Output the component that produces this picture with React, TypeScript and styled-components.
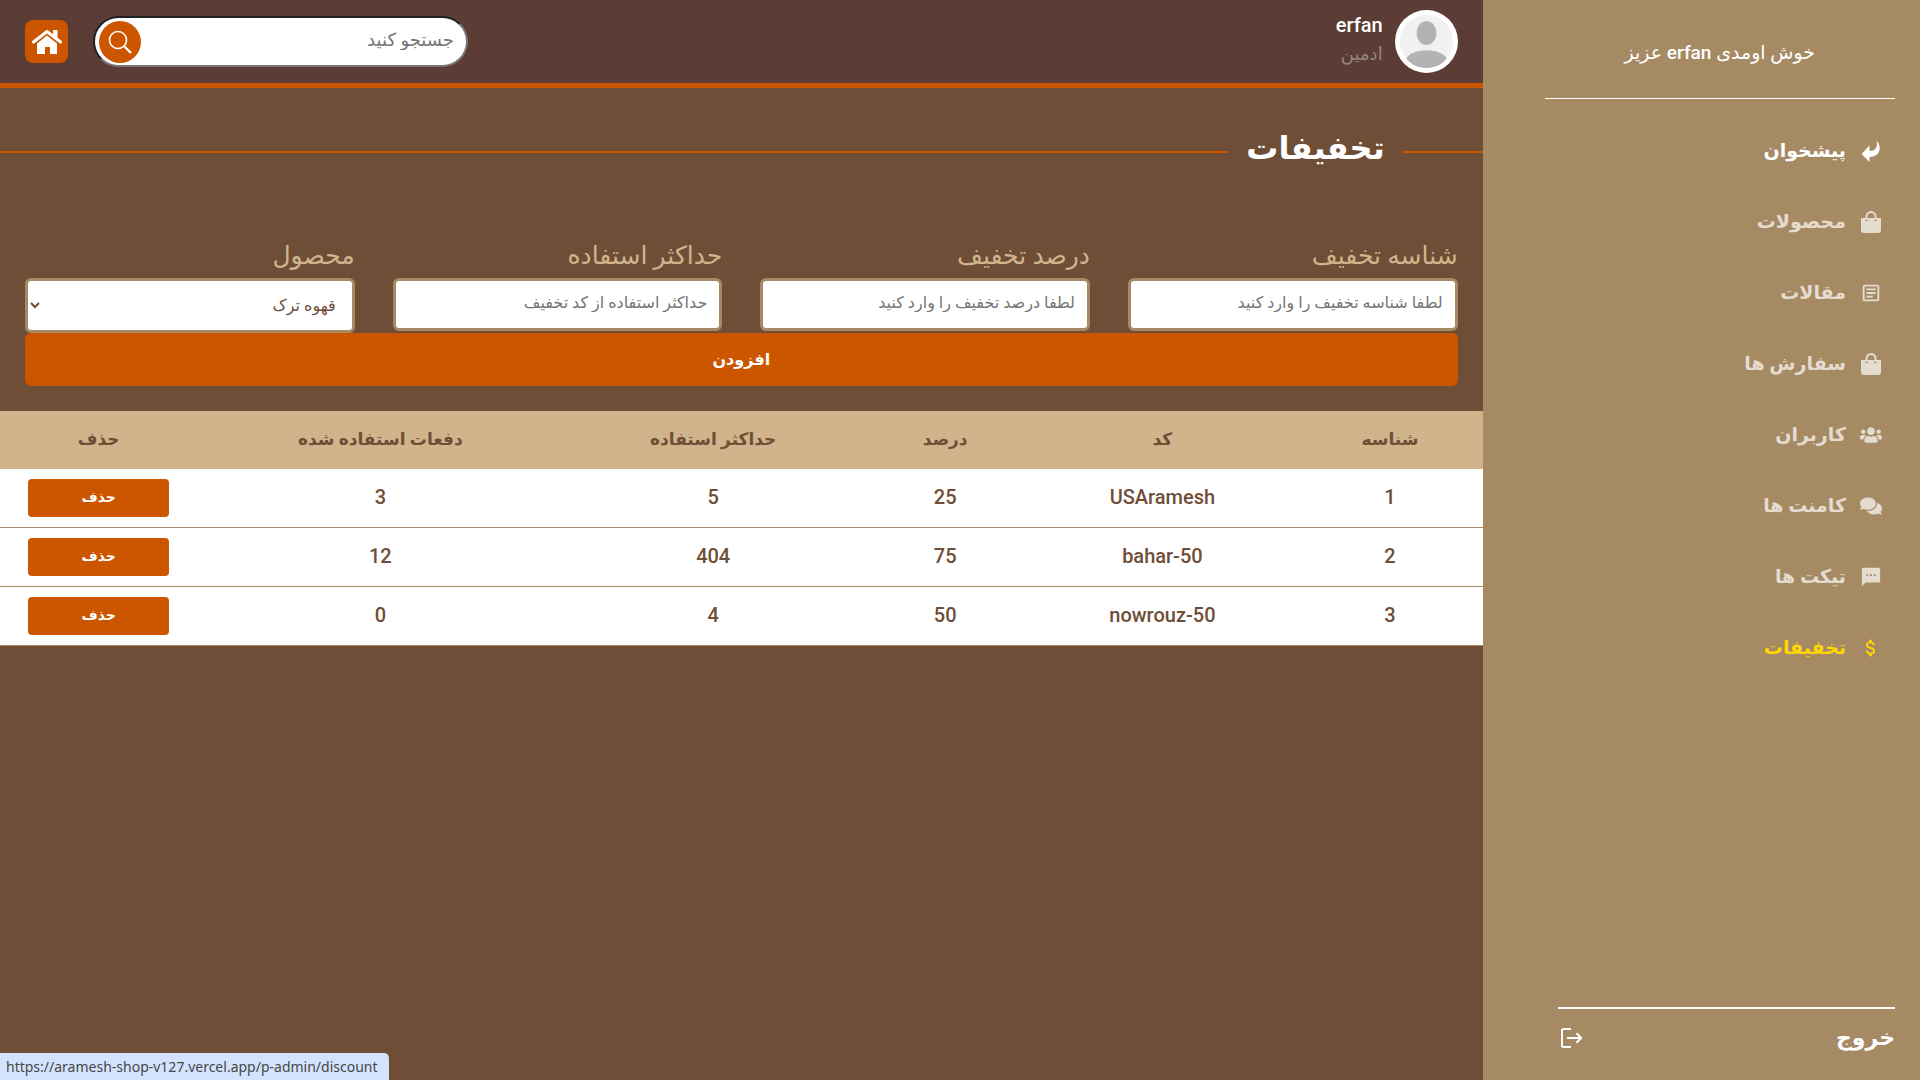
import React from "react";
import styled, { createGlobalStyle } from "styled-components";
import { FaUsers, FaComments } from "react-icons/fa";
import { MdOutlineArticle, MdTextsms, MdAttachMoney } from "react-icons/md";

const color = {
  coffee: "#6f4e37",
  cocoa: "#5c3d36",
  sand: "#a68a64",
  tan: "#d2b48c",
  orange: "#cc5500",
  gold: "#ffd700",
};

const GlobalStyle = createGlobalStyle`
  *, *::before, *::after { box-sizing: border-box; }
  body {
    margin: 0;
    background: ${color.coffee};
    font-family: Roboto, "DejaVu Sans", sans-serif;
    direction: rtl;
  }
  button, input, select { font-family: inherit; }
  h1, p, ul { margin: 0; padding: 0; }
`;

const Layout = styled.div`
  display: grid;
  grid-template-columns: 59fr 200fr;
  min-height: 100vh;
`;

const Sidebar = styled.aside`
  display: flex;
  flex-direction: column;
  padding: 36px 25px 20px 62px;
  background: ${color.sand};
  color: #fff;
`;

const Welcome = styled.p`
  padding-bottom: 28px;
  border-bottom: 1px solid #fff;
  font-size: 19px;
  font-weight: 500;
  line-height: 34px;
  text-align: center;
`;

const Menu = styled.ul`
  flex: 1;
  display: flex;
  flex-direction: column;
  gap: 35px;
  padding: 34px 13px 0 0;
  list-style: none;
`;

const MenuLink = styled.a<{ $tone: string }>`
  display: flex;
  align-items: center;
  gap: 14px;
  color: ${(p) => p.$tone};
  font-size: 19px;
  font-weight: 700;
  line-height: 36px;
  text-decoration: none;
  svg { width: 22px; height: 22px; }
`;

const Logout = styled.button`
  display: flex;
  align-items: center;
  justify-content: space-between;
  margin-left: 13px;
  padding: 7px 0 0;
  border: 0;
  border-top: 2px solid #fff;
  background: none;
  color: #fff;
  font-size: 22px;
  font-weight: 700;
  line-height: 44px;
`;

const Main = styled.main`
  min-width: 0;
`;

const Header = styled.header`
  display: flex;
  align-items: center;
  justify-content: space-between;
  padding: 10px 25px;
  border-bottom: 5px solid ${color.orange};
  background: ${color.cocoa};
`;

const Profile = styled.div`
  display: flex;
  gap: 12px;
`;

const Avatar = styled.svg`
  width: 63px;
  height: 63px;
`;

const UserName = styled.p`
  color: #fff;
  font-size: 20px;
  font-weight: 500;
  line-height: 30px;
`;

const Role = styled.p`
  color: #958480;
  font-size: 18px;
  line-height: 28px;
`;

const Tools = styled.div`
  display: flex;
  align-items: center;
  gap: 25px;
`;

const SearchBox = styled.form`
  display: flex;
  align-items: center;
  width: 375px;
  height: 51px;
  padding: 0 12px 0 4px;
  border: 2px inset #767676;
  border-radius: 26px;
  background: #fff;
`;

const SearchInput = styled.input`
  flex: 1;
  min-width: 0;
  padding: 0 0 4px;
  border: 0;
  outline: 0;
  background: none;
  font-size: 18px;
  &::placeholder { color: #757575; }
`;

const SearchButton = styled.button`
  display: grid;
  place-items: center;
  width: 42px;
  height: 42px;
  padding: 0;
  border: 0;
  border-radius: 50%;
  background: ${color.orange};
  color: #fff;
`;

const HomeLink = styled.a`
  display: grid;
  place-items: center;
  width: 43px;
  height: 43px;
  border-radius: 8px;
  background: ${color.orange};
  color: #fff;
`;

const Title = styled.h1`
  display: flex;
  align-items: center;
  gap: 18px;
  padding-top: 28px;
  color: #fff;
  font-size: 32px;
  font-weight: 700;
  line-height: 64px;
  &::before, &::after {
    content: "";
    height: 2px;
    margin-top: 8px;
    background: ${color.orange};
  }
  &::before { width: 80px; }
  &::after { flex: 1; }
`;

const Form = styled.form`
  padding: 54px 25px 25px;
`;

const Fields = styled.div`
  display: grid;
  grid-template-columns: repeat(4, 1fr);
  align-items: start;
  column-gap: 38px;
`;

const Field = styled.label`
  display: flex;
  flex-direction: column;
  color: ${color.tan};
  font-size: 25px;
  line-height: 44px;
`;

const TextInput = styled.input`
  width: 100%;
  height: 53px;
  padding: 0 12px 4px;
  border: 3px solid ${color.sand};
  border-radius: 6px;
  outline: 0;
  background: #fff;
  font-size: 16px;
  &::placeholder { color: #757575; }
`;

const Select = styled.select`
  width: 100%;
  height: 55px;
  padding: 0 12px 0 0;
  border: 3px solid ${color.sand};
  border-radius: 6px;
  background: #fff;
  color: ${color.coffee};
  font-size: 16px;
`;

const AddButton = styled.button`
  display: block;
  width: 100%;
  height: 53px;
  border: 0;
  border-radius: 6px;
  background: ${color.orange};
  color: #fff;
  font-size: 16px;
  font-weight: 700;
`;

const Table = styled.table`
  width: 100%;
  table-layout: fixed;
  border-collapse: separate;
  border-spacing: 0;
  color: ${color.coffee};
  text-align: center;
`;

const Col = styled.col<{ $width: string }>`
  width: ${(p) => p.$width};
`;

const HeadCell = styled.th`
  height: 58px;
  padding: 0 0 2px;
  background: ${color.tan};
  font-size: 17px;
  font-weight: 700;
`;

const Cell = styled.td`
  height: 59px;
  padding: 0 28px 2px;
  border-bottom: 1px solid ${color.sand};
  background: #fff;
  font-size: 20px;
  font-weight: 500;
`;

const ActionCell = styled(Cell)`
  padding-bottom: 0;
`;

const DeleteButton = styled.button`
  display: block;
  width: 100%;
  height: 38px;
  padding: 0 0 2px;
  border: 0;
  border-radius: 4px;
  background: ${color.orange};
  color: #fff;
  font-size: 14px;
  font-weight: 700;
`;

const StatusBar = styled.div`
  position: fixed;
  bottom: 0;
  left: 0;
  padding: 0 11px 0 6px;
  border-top-right-radius: 5px;
  background: #d3e3fd;
  color: #474747;
  direction: ltr;
  font-family: "Noto Sans", sans-serif;
  font-size: 14px;
  line-height: 27px;
`;

const ReturnIcon = () => (
  <svg viewBox="0 0 22 22" fill="currentColor" aria-hidden="true">
    <path d="M1.500 14 9.500 5.500V11C14.500 11 18.500 8 16.500 .5 22 6.500 21 16.500 9.500 17V22Z" />
  </svg>
);

const BagIcon = () => (
  <svg viewBox="0 0 22 22" fill="currentColor" fillRule="evenodd" aria-hidden="true">
    <path d="M5.500 7V5.500a5.500 5.500 0 0 1 11 0V7H21V19a3 3 0 0 1-3 3H4a3 3 0 0 1-3-3V7ZM7.500 7h7V5.500a3.500 3.500 0 0 0-7 0ZM5.200 8.800A1.400 1.400 0 0 0 8 8.800ZM14 8.800a1.400 1.400 0 0 0 2.800 0Z" />
  </svg>
);

const HomeIcon = () => (
  <svg width="30" height="26" viewBox="0 0 30 26" aria-hidden="true">
    <path d="M1.500 13 15 2.500 28.500 13" fill="none" stroke="#fff" strokeWidth="3" strokeLinecap="round" strokeLinejoin="round" />
    <path d="M21 1h4.500v8.500L21 6Z" fill="#fff" />
    <path d="M15 6.500 25 14.500V25H18V18H13v7H5V14.500Z" fill="#fff" />
  </svg>
);

const SearchIcon = () => (
  <svg width="24" height="24" viewBox="0 0 24 24" fill="none" stroke="currentColor" aria-hidden="true">
    <circle cx="10" cy="10" r="8.500" strokeWidth="1.600" />
    <path d="m16 16 7 7" strokeWidth="2.200" />
  </svg>
);

const ExitIcon = () => (
  <svg width="26" height="26" viewBox="0 0 26 26" fill="none" stroke="currentColor" strokeWidth="2" aria-hidden="true">
    <path d="M13 4H5.500A1.500 1.500 0 0 0 4 5.500V20.500A1.500 1.500 0 0 0 5.500 22H13" />
    <path d="M9 13H23M18.500 8.300 23.200 13 18.500 17.700" />
  </svg>
);

const muted = "#e5dcd0";

const menu = [
  { label: "پیشخوان", icon: ReturnIcon, tone: "#fff" },
  { label: "محصولات", icon: BagIcon, tone: muted },
  { label: "مقالات", icon: MdOutlineArticle, tone: muted },
  { label: "سفارش ها", icon: BagIcon, tone: muted },
  { label: "کاربران", icon: FaUsers, tone: muted },
  { label: "کامنت ها", icon: FaComments, tone: muted },
  { label: "تیکت ها", icon: MdTextsms, tone: muted },
  { label: "تخفیفات", icon: MdAttachMoney, tone: color.gold },
];

const fields = [
  { label: "شناسه تخفیف", hint: "لطفا شناسه تخفیف را وارد کنید" },
  { label: "درصد تخفیف", hint: "لطفا درصد تخفیف را وارد کنید" },
  { label: "حداکثر استفاده", hint: "حداکثر استفاده از کد تخفیف" },
];

const columns = [
  { label: "شناسه", width: "12.5%" },
  { label: "کد", width: "18.2%" },
  { label: "درصد", width: "11.1%" },
  { label: "حداکثر استفاده", width: "20.2%" },
  { label: "دفعات استفاده شده", width: "24.7%" },
  { label: "حذف", width: "13.3%" },
];

const discounts = [
  { code: "USAramesh", percent: 25, max: 5, used: 3 },
  { code: "bahar-50", percent: 75, max: 404, used: 12 },
  { code: "nowrouz-50", percent: 50, max: 4, used: 0 },
];

export default function App() {
  return (
    <>
      <GlobalStyle />
      <Layout lang="fa">
        <Sidebar>
          <Welcome>خوش اومدی erfan عزیز</Welcome>
          <Menu>
            {menu.map(({ label, icon: Icon, tone }) => (
              <li key={label}>
                <MenuLink href="#" $tone={tone}>
                  <Icon />
                  {label}
                </MenuLink>
              </li>
            ))}
          </Menu>
          <Logout type="button">
            خروج
            <ExitIcon />
          </Logout>
        </Sidebar>
        <Main>
          <Header>
            <Profile>
              <Avatar viewBox="0 0 63 63" role="img" aria-label="erfan">
                <circle cx="31.5" cy="31.5" r="31.5" fill="#fff" />
                <circle cx="31.5" cy="31.5" r="26.5" fill="#f1f1f1" />
                <ellipse cx="31.5" cy="23" rx="10" ry="12" fill="#b3b3b3" />
                <path d="M11.5 48.500C14 43 22 40.500 31.500 40.500S49 43 51.500 48.500C47 54.500 40 58 31.500 58S16 54.500 11.500 48.500Z" fill="#b3b3b3" />
              </Avatar>
              <div>
                <UserName>erfan</UserName>
                <Role>ادمین</Role>
              </div>
            </Profile>
            <Tools>
              <SearchBox>
                <SearchInput type="search" placeholder="جستجو کنید" aria-label="جستجو کنید" />
                <SearchButton type="button" aria-label="جستجو">
                  <SearchIcon />
                </SearchButton>
              </SearchBox>
              <HomeLink href="#" aria-label="خانه">
                <HomeIcon />
              </HomeLink>
            </Tools>
          </Header>
          <Title>تخفیفات</Title>
          <Form>
            <Fields>
              {fields.map((f) => (
                <Field key={f.label}>
                  {f.label}
                  <TextInput type="text" placeholder={f.hint} />
                </Field>
              ))}
              <Field>
                محصول
                <Select>
                  <option>قهوه ترک</option>
                </Select>
              </Field>
            </Fields>
            <AddButton type="button">افزودن</AddButton>
          </Form>
          <Table>
            <colgroup>
              {columns.map((c) => (
                <Col key={c.label} $width={c.width} />
              ))}
            </colgroup>
            <thead>
              <tr>
                {columns.map((c) => (
                  <HeadCell key={c.label} scope="col">{c.label}</HeadCell>
                ))}
              </tr>
            </thead>
            <tbody>
              {discounts.map((d, i) => (
                <tr key={d.code}>
                  <Cell>{i + 1}</Cell>
                  <Cell>{d.code}</Cell>
                  <Cell>{d.percent}</Cell>
                  <Cell>{d.max}</Cell>
                  <Cell>{d.used}</Cell>
                  <ActionCell>
                    <DeleteButton type="button">حذف</DeleteButton>
                  </ActionCell>
                </tr>
              ))}
            </tbody>
          </Table>
        </Main>
      </Layout>
      <StatusBar>https://aramesh-shop-v127.vercel.app/p-admin/discount</StatusBar>
    </>
  );
}
